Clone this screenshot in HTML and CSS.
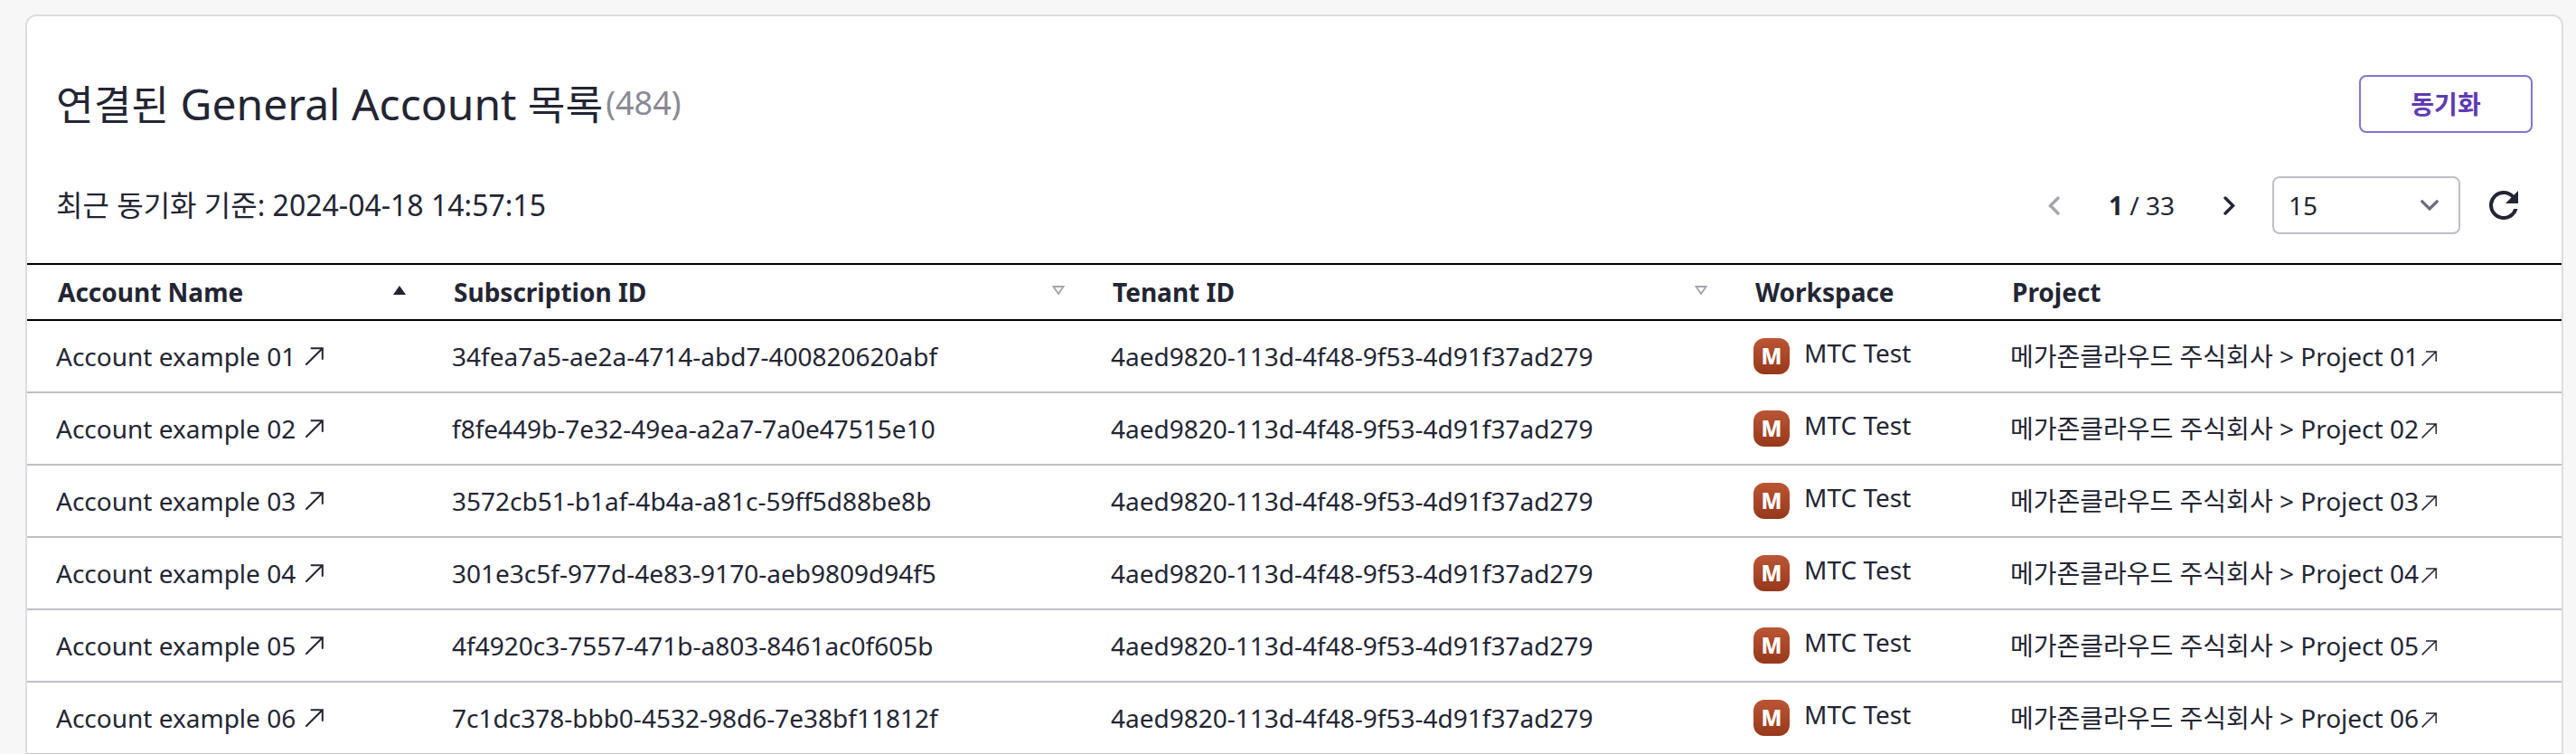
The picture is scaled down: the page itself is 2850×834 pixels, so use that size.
FILE: index.html
```
<!DOCTYPE html>
<html lang="ko">
<head>
<meta charset="utf-8">
<title>General Account</title>
<link rel="stylesheet" href="styles.css">
</head>
<body>
<svg class="defs" width="0" height="0" aria-hidden="true">
  <symbol id="ext" viewBox="0 0 20 20"><path d="M1 19 18.800 1.200M6.500 1.200h12.300v11.800" fill="none" stroke="currentColor" stroke-width="2" stroke-linecap="round"/></symbol>
  <symbol id="ext-thin" viewBox="0 0 17 17"><path d="M.600 16.400 16 1M5 .900h11.200v11" fill="none" stroke="currentColor" stroke-width="1.500"/></symbol>
  <symbol id="sort" viewBox="0 0 14 10"><path d="M1.500 1h11L7 9z" fill="none" stroke="currentColor" stroke-width="1.900"/></symbol>
</svg>
<main class="card">
  <header class="title-row">
    <h1 class="title"><span class="ko">연결된</span> General Account <span class="ko">목록</span><span class="count">(484)</span></h1>
    <button class="sync" type="button">동기화</button>
  </header>
  <div class="toolbar">
    <p class="synced">최근 동기화 기준: 2024-04-18 14:57:15</p>
    <div class="tools">
      <svg class="prev" viewBox="0 0 13 21"><path d="M11 2 2.500 10.500 11 19" fill="none" stroke="currentColor" stroke-width="3.400" stroke-linecap="round"/></svg>
      <span class="page"><b>1</b> / 33</span>
      <svg class="next" viewBox="0 0 13 21"><path d="M2 2l8.500 8.500L2 19" fill="none" stroke="currentColor" stroke-width="3.400" stroke-linecap="round"/></svg>
      <div class="select"><span>15</span><svg class="chev" viewBox="0 0 20 12"><path d="M1.800 1.800 10 10l8.200-8.200" fill="none" stroke="currentColor" stroke-width="3.200" stroke-linecap="round"/></svg></div>
      <svg class="reload" viewBox="4 4 16 16"><path fill="currentColor" d="M17.650 6.350A7.958 7.958 0 0 0 12 4a8 8 0 1 0 7.730 10h-2.080A6 6 0 1 1 12 6c1.660 0 3.140.69 4.220 1.780L13 11h7V4z"/></svg>
    </div>
  </div>
  <div class="table" id="table">
    <div class="row head">
      <div class="cell">Account Name<svg class="asc" viewBox="0 0 14 10"><path d="M7 0l7 10H0z" fill="currentColor"/></svg></div>
      <div class="cell">Subscription ID<svg class="sort"><use href="#sort"/></svg></div>
      <div class="cell">Tenant ID<svg class="sort"><use href="#sort"/></svg></div>
      <div class="cell">Workspace</div>
      <div class="cell">Project</div>
    </div>
  </div>
</main>
<script src="app.js"></script>
</body>
</html>
```
FILE: styles.css
```
* { box-sizing: border-box; }
body {
  margin: 0;
  height: 834px;
  overflow: hidden;
  background: #f7f7f7;
  color: #232533;
  font-family: "Noto Sans", "Noto Sans CJK KR", sans-serif;
  font-size: 28px;
  line-height: 40px;
}
.defs { position: absolute; }
.card {
  margin: 16px 14px 0 28px;
  height: 818px;
  overflow: hidden;
  background: #fff;
  border: 2px solid #dddddf;
  border-bottom: 0;
  border-radius: 12px 12px 0 0;
}
.title-row {
  display: flex;
  justify-content: space-between;
  align-items: center;
  height: 64px;
  margin: 65px 32px 0;
}
.title { margin: 0; font-size: 48px; font-weight: 400; line-height: 64px; white-space: nowrap; }
.ko { font-size: 45.300px; line-height: 1; }
.count { display: inline-block; margin-left: 3px; font-size: 36px; line-height: 1; vertical-align: 6px; color: #898995; }
.sync {
  width: 192px;
  height: 64px;
  padding: 0;
  border: 2px solid #8574cf;
  border-radius: 8px;
  background: #fff;
  color: #5e3ab3;
  font: 700 28px/40px "Noto Sans", "Noto Sans CJK KR", sans-serif;
}
.toolbar {
  display: flex;
  justify-content: space-between;
  align-items: center;
  height: 64px;
  margin: 48px 48px 32px 32px;
}
.synced { margin: 0; font-size: 32px; }
.tools { display: flex; align-items: center; }
.prev, .next { width: 13px; height: 21px; }
.prev { color: #a5a5b0; }
.page { margin: 0 54px; white-space: nowrap; }
.select {
  display: flex;
  justify-content: space-between;
  align-items: center;
  width: 208px;
  height: 64px;
  margin-left: 41px;
  padding: 0 22px 0 16px;
  border: 2px solid #bfbfc5;
  border-radius: 8px;
}
.chev { width: 20px; height: 12px; color: #6b6b7b; }
.reload { width: 32px; height: 32px; margin-left: 32px; }
.row {
  display: grid;
  grid-template-columns: 438px 729px 711px 284px 1fr;
  height: 80px;
  border-bottom: 2px solid #bfbfc5;
}
.head { height: 64px; border-top: 2px solid #000; border-bottom-color: #000; font-weight: 700; }
.cell { display: flex; align-items: center; padding-left: 32px; white-space: nowrap; }
.head .cell { justify-content: space-between; padding-left: 34px; padding-right: 19px; }
.asc, .sort { width: 14px; height: 10px; margin-bottom: 4px; }
.sort { color: #a5a5b0; }
.ext { width: 20px; height: 20px; margin-left: 11px; }
.ext-thin { width: 17px; height: 17px; margin: 5px 0 0 3px; }
.badge {
  display: flex;
  align-items: center;
  justify-content: center;
  width: 40px;
  height: 40px;
  margin-right: 16px;
  border-radius: 12px;
  background: linear-gradient(#bb5635, #96381b);
  color: #fff;
  font-size: 24px;
  font-weight: 800;
}
.ws { padding-bottom: 8px; }
```
FILE: app.js
```
const ids = [
  "34fea7a5-ae2a-4714-abd7-400820620abf",
  "f8fe449b-7e32-49ea-a2a7-7a0e47515e10",
  "3572cb51-b1af-4b4a-a81c-59ff5d88be8b",
  "301e3c5f-977d-4e83-9170-aeb9809d94f5",
  "4f4920c3-7557-471b-a803-8461ac0f605b",
  "7c1dc378-bbb0-4532-98d6-7e38bf11812f"
];
document.getElementById("table").insertAdjacentHTML("beforeend", ids.map((id, i) => `
  <div class="row">
    <div class="cell">Account example 0${i + 1}<svg class="ext"><use href="#ext"/></svg></div>
    <div class="cell">${id}</div>
    <div class="cell">4aed9820-113d-4f48-9f53-4d91f37ad279</div>
    <div class="cell"><span class="badge">M</span><span class="ws">MTC Test</span></div>
    <div class="cell">메가존클라우드 주식회사 &gt; Project 0${i + 1}<svg class="ext-thin"><use href="#ext-thin"/></svg></div>
  </div>`).join(""));
```
